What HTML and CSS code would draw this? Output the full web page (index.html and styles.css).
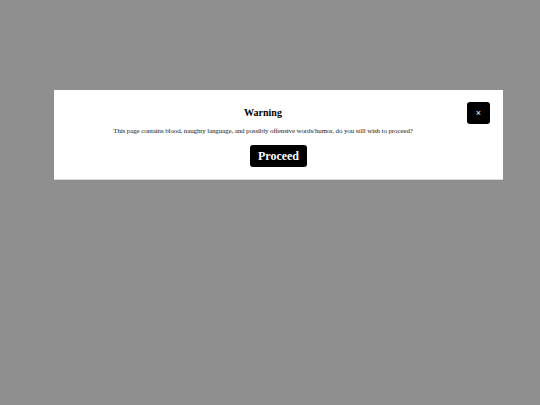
FILE: index.html
```html
<!DOCTYPE html>
<html lang="en">
<head>
    <meta charset="UTF-8">
    <meta name="viewport" content="width=device-width, initial-scale=1.0">
    <title>Content Warning</title>
    <link rel="stylesheet" href="styles.css">
</head>
<body>

    <div class="overlay">
        <div class="warning-modal">
            <div class="modal-head">
                <div class="modal-body">
                    <h2 class="modal-title">Warning</h2>
                    <p class="modal-text">This page contains blood, naughty language, and possibly offensive words/humor, do you still wish to proceed?</p>
                </div>
                <button type="button" class="close-button" aria-label="Close">&times;</button>
            </div>
            <div class="modal-actions">
                <button type="button" class="proceed-button">Proceed</button>
            </div>
        </div>
    </div>

</body>
</html>
```

FILE: styles.css
```css
/* Global Styles */
* {
    margin: 0;
    padding: 0;
    box-sizing: border-box;
}

body {
    font-family: "Liberation Serif", "Times New Roman", serif;
    background-color: #ffffff;
    height: 100vh;
}

/* Dimmed page behind the dialog */
.overlay {
    background-color: #8f8f8f;
    height: 100vh;
    padding-top: 90px;
    padding-left: 54px;
}

/* Dialog */
.warning-modal {
    background: #ffffff;
    width: 449px;
    padding: 12px 13px 12px;
    border-bottom: 1px solid #d9d9d9;
}

.modal-head {
    display: flex;
    align-items: flex-start;
    gap: 8px;
}

.modal-body {
    flex: 1;
    text-align: center;
}

.modal-title {
    font-size: 10px;
    font-weight: bold;
    line-height: 22px;
    color: #000000;
}

.modal-text {
    font-size: 7px;
    letter-spacing: -0.12px;
    line-height: 10px;
    margin-top: 2px;
    color: #1a1a1a;
}

/* Close Button */
.close-button {
    width: 23px;
    height: 22px;
    background-color: #000000;
    color: #ffffff;
    border: none;
    border-radius: 3px;
    font-family: "Liberation Sans", Arial, sans-serif;
    font-size: 9px;
    line-height: 22px;
    cursor: pointer;
}

/* Proceed Button */
.modal-actions {
    margin-top: 9px;
    text-align: center;
}

.proceed-button {
    background-color: #000000;
    color: #ffffff;
    font-family: "Liberation Serif", "Times New Roman", serif;
    font-size: 12px;
    font-weight: bold;
    line-height: 14px;
    padding: 4px 8px;
    border: none;
    border-radius: 3px;
    cursor: pointer;
}
```
